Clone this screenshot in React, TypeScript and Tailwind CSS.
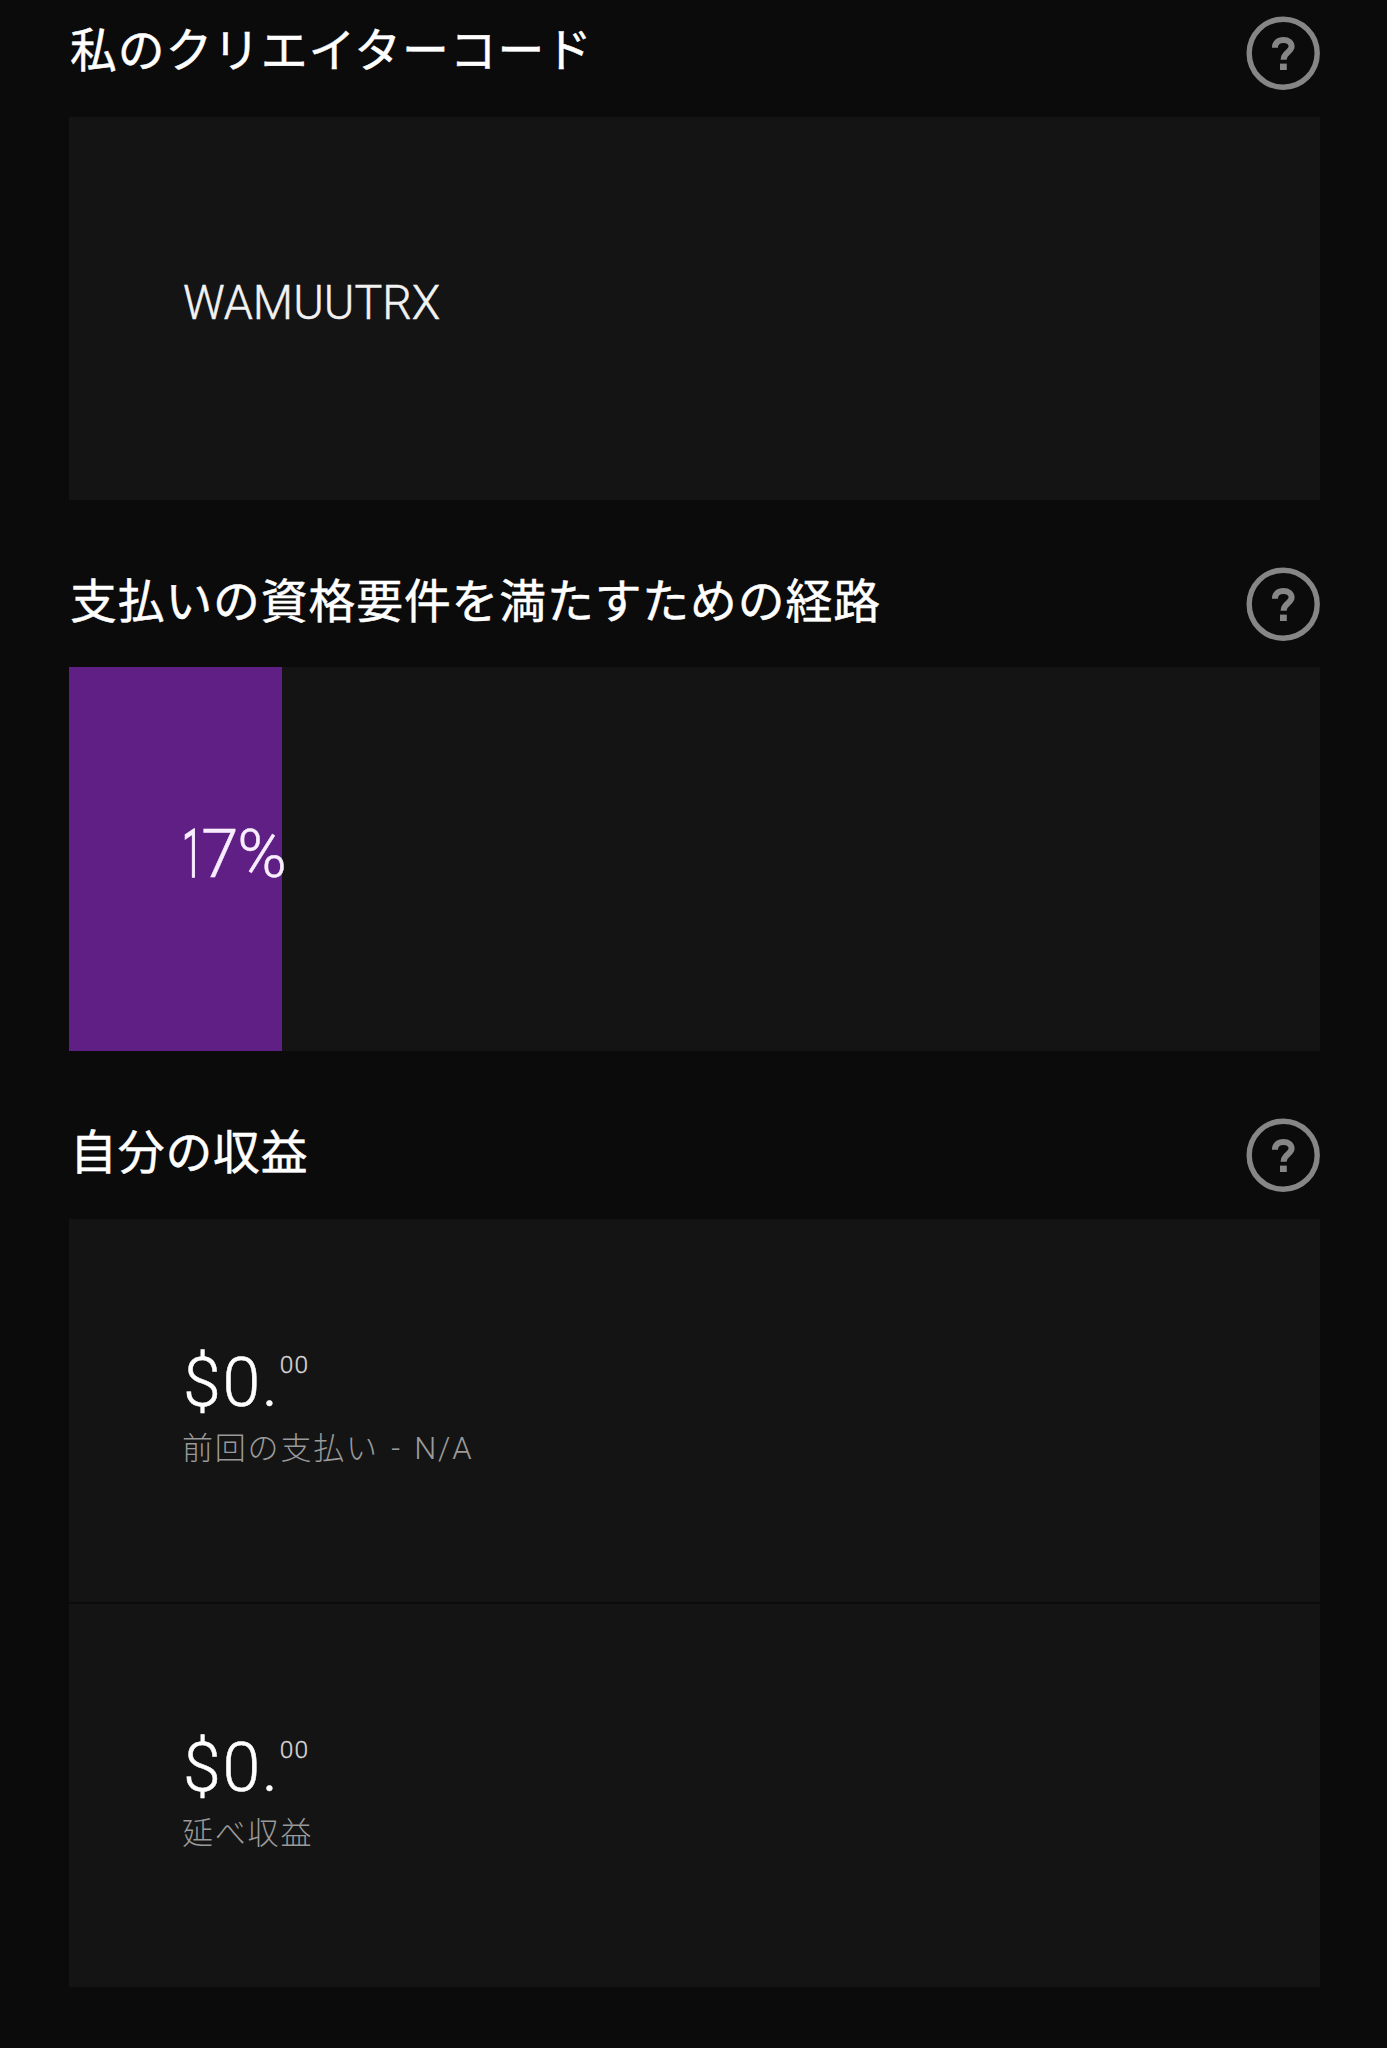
import type { ReactNode } from "react";

function HelpIcon() {
  return (
    <button aria-label="ヘルプ" className="h-[74px] w-[74px] shrink-0">
      <svg viewBox="0 0 74 74" className="h-full w-full" fill="none">
        <circle cx="37.2" cy="37.2" r="34" stroke="#868686" strokeWidth="5.4" />
        <path d="M28.9 31.8C28.9 27 32.4 24 37.4 24C42.4 24 45.6 26.6 45.6 30.6C45.6 36 37.6 36.2 37.6 43.8" stroke="#868686" strokeWidth="6" />
        <rect x="34" y="47.6" width="6.8" height="6.4" fill="#868686" />
      </svg>
    </button>
  );
}

function SectionHeader({ title }: { title: string }) {
  return (
    <div className="flex h-[74px] items-start justify-between">
      <h2 className="-mt-[3px] ml-px font-['Noto_Sans_CJK_JP',sans-serif] text-[46.8px] leading-[68px] font-normal tracking-[0.9px] whitespace-nowrap text-white [-webkit-text-stroke:0.5px_white]">
        {title}
      </h2>
      <HelpIcon />
    </div>
  );
}

function Panel({ children }: { children: ReactNode }) {
  return <div className="flex h-[383px] flex-col bg-[#141414] pl-[114px]">{children}</div>;
}

function Amount({ label }: { label: string }) {
  return (
    <>
      <div className="mt-[124px] flex h-[80px] items-start text-white">
        <span className="font-['Roboto',sans-serif] text-[68px] leading-[80px] font-light tracking-[1.7px] [-webkit-text-stroke:0.5px_white]">$0.</span>
        <span className="mt-[6px] font-['Roboto',sans-serif] text-[24.5px] leading-[32px] font-light tracking-[1px] text-[#d8d8d8] [-webkit-text-stroke:0.3px_#d8d8d8]">
          00
        </span>
      </div>
      <p className="mt-[3px] -ml-px font-['Roboto','Noto_Sans_CJK_JP',sans-serif] text-[31px] leading-[46px] font-light tracking-[1.8px] [word-spacing:3px] text-[#9a9a9a]">
        {label}
      </p>
    </>
  );
}

export default function App() {
  return (
    <main lang="ja" className="flex h-[2048px] w-full flex-col bg-[#0b0b0b] pt-[16px] pr-[67px] pl-[69px]">
      <section className="flex h-[551px] flex-col gap-[27px]">
        <SectionHeader title="私のクリエイターコード" />
        <Panel>
          <p className="mt-[150px] origin-left scale-x-[0.96] font-['Roboto',sans-serif] text-[48.5px] leading-[72px] font-light text-[#f2f2f2] [-webkit-text-stroke:0.5px_#f2f2f2]">
            WAMUUTRX
          </p>
        </Panel>
      </section>
      <section className="flex h-[551px] flex-col gap-[26px]">
        <SectionHeader title="支払いの資格要件を満たすための経路" />
        <div className="h-[384px] bg-[#141414]">
          <div className="h-full w-[213px] bg-[#601f84] pl-[114px]">
            <p className="pt-[147px] font-['Roboto',sans-serif] text-[67px] leading-[80px] font-light whitespace-nowrap text-[#f8eeff] [-webkit-text-stroke:0.5px_#f8eeff]">
              <span className="-ml-px inline-block origin-left scale-x-[0.55] [-webkit-text-stroke:1.6px_#f8eeff]">1</span>
              <span className="-ml-[18px] inline-block">7</span>
              <span className="-ml-px inline-block">%</span>
            </p>
          </div>
        </div>
      </section>
      <section className="flex flex-col gap-[27px]">
        <SectionHeader title="自分の収益" />
        <div className="flex flex-col gap-[3px]">
          <div className="-mb-px">
            <Panel>
              <Amount label="前回の支払い - N/A" />
            </Panel>
          </div>
          <Panel>
            <Amount label="延べ収益" />
          </Panel>
        </div>
      </section>
    </main>
  );
}
